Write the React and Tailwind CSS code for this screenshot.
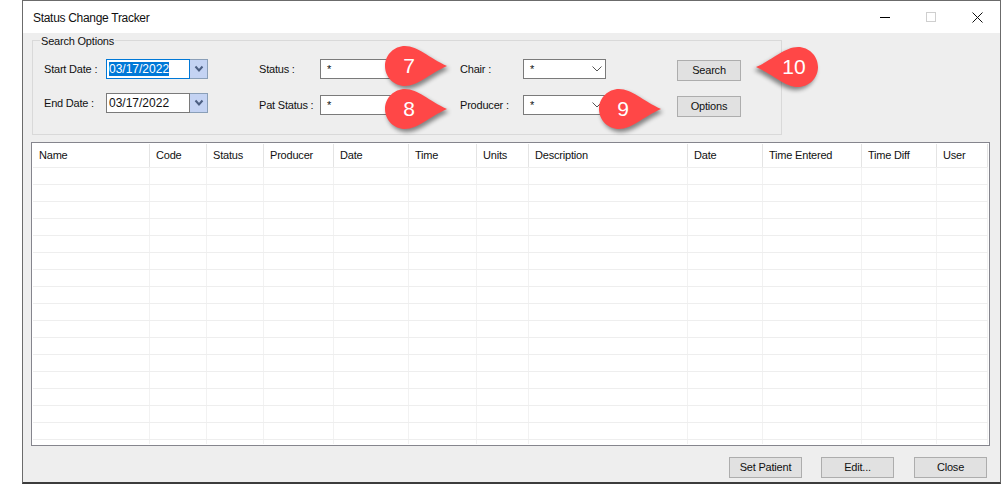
import React from "react";

const font = "font-['Liberation_Sans',sans-serif]";
const uiText = "text-[11px] tracking-[-0.2px] text-[#111] leading-none";

const columns = [
  { name: "Name", w: "w-[117px]" },
  { name: "Code", w: "w-[57px]" },
  { name: "Status", w: "w-[57px]" },
  { name: "Producer", w: "w-[70px]" },
  { name: "Date", w: "w-[75px]" },
  { name: "Time", w: "w-[68px]" },
  { name: "Units", w: "w-[52px]" },
  { name: "Description", w: "w-[159px]" },
  { name: "Date", w: "w-[75px]" },
  { name: "Time Entered", w: "w-[99px]" },
  { name: "Time Diff", w: "w-[75px]" },
  { name: "User", w: "w-[51px]" },
];

const rows = Array.from({ length: 17 });

const WinButton = ({ children, className }) => (
  <button className={`h-[21px] bg-[#e1e1e1] border border-[#adadad] ${uiText} ${className}`}>
    {children}
  </button>
);

const Label = ({ children, className = "" }) => (
  <div className={`self-center ${uiText} ${className}`}>{children}</div>
);

const DateField = ({ focused, className = "" }) => (
  <div className={`flex h-[20px] w-[102px] bg-white ${className}`}>
    <div
      className={`flex-1 flex items-center pl-[2px] border ${
        focused ? "border-[#0078d7]" : "border-[#7a7a7a]"
      } text-[12px] leading-[14px]`}
    >
      <span className={focused ? "bg-[#0078d7] text-white" : "text-[#111]"}>03/17/2022</span>
    </div>
    <div className="w-[18px] flex items-center justify-center bg-[#c4d3f3] border border-[#8a9fb8] border-l-0">
      <svg width="10" height="8" viewBox="0 0 10 8">
        <path d="M1.5 1.5 5 5.500 8.500 1.500" fill="none" stroke="#4c5f82" strokeWidth="2" />
      </svg>
    </div>
  </div>
);

const TextField = () => (
  <div className={`h-[20px] w-[83px] bg-white border border-[#7a7a7a] flex items-center pl-[6px] ${uiText}`}>
    *
  </div>
);

const SelectField = () => (
  <div className={`h-[20px] w-[83px] bg-white border border-[#7a7a7a] flex items-center justify-between pl-[6px] pr-[3px] ${uiText}`}>
    <span>*</span>
    <svg width="10" height="6" viewBox="0 0 10 6">
      <path d="M.5.5 5 5 9.500.5" fill="none" stroke="#555" strokeWidth="1" />
    </svg>
  </div>
);

// numbered red pin pointing to the right
const Callout = ({ label, className, flip }) => (
  <div className={`absolute w-[66px] h-[48px] ${className}`}>
    <svg
      width="66"
      height="48"
      viewBox="0 0 66 48"
      className={`absolute inset-0 overflow-visible drop-shadow-[2px_3px_2px_rgba(0,0,0,0.45)] ${flip ? "-scale-x-100" : ""}`}
    >
      <path d="M23 4C36 4 47 16 65 24 47 32 36 44 23 44 12 44 3 35 3 24S12 4 23 4Z" fill="#ff4747" />
    </svg>
    <span
      className={`absolute top-[12px] w-[40px] ${
        flip ? "right-[7px]" : "left-[7px]"
      } text-center text-white text-[21px] leading-[24px] ${font}`}
    >
      {label}
    </span>
  </div>
);

const App = () => {
  return (
    <div className={`relative w-[1001px] h-[484px] bg-white pl-[22px] overflow-hidden ${font}`}>
      <div className="h-full flex flex-col border border-[#6b6b6b] border-b-2 border-b-[#3c3c3c]">
        {/* title bar */}
        <div className="h-[32px] shrink-0 flex items-center justify-between bg-white pl-[10px]">
          <div className="mt-[1px] text-[12px] tracking-[-0.3px] text-[#111] leading-none">Status Change Tracker</div>
          <div className="flex items-center">
            <div className="w-[46px] flex justify-center">
              <div className="w-[10px] h-[1px] bg-black" />
            </div>
            <div className="w-[46px] flex justify-center">
              <div className="w-[10px] h-[10px] border border-[#cfcfcf]" />
            </div>
            <div className="w-[46px] flex justify-center">
              <svg width="11" height="11" viewBox="0 0 11 11">
                <path d="M.5.5l10 10M10.500.5l-10 10" stroke="#111" strokeWidth="1" fill="none" />
              </svg>
            </div>
          </div>
        </div>

        <div className="flex-1 flex flex-col bg-[#eeeeee] pl-[8px] pr-[9px]">
          {/* search options */}
          <fieldset className="mt-[2px] ml-[1px] w-[750px] h-[100px] border border-[#d9d9d9] pl-[11px]">
            <legend className={`-ml-[4px] px-[1px] ${uiText} leading-[13px]`}>
              <span className="relative top-[1px]">Search Options</span>
            </legend>
            <div className="grid grid-cols-[62px_102px_51px_61px_83px_57px_63px_83px_71px_64px] grid-rows-[20px_20px] gap-y-[16px] items-start mt-[13px]">
              <Label>Start Date :</Label>
              <DateField focused />
              <div />
              <Label>Status :</Label>
              <TextField />
              <div />
              <Label>Chair :</Label>
              <SelectField />
              <div />
              <WinButton className="w-[64px] mt-[1px]">Search</WinButton>

              <Label className="mb-[4px]">End Date :</Label>
              <DateField className="-mt-[2px]" />
              <div />
              <Label>Pat Status :</Label>
              <TextField />
              <div />
              <Label>Producer :</Label>
              <SelectField />
              <div />
              <WinButton className="w-[64px] mt-[1px]">Options</WinButton>
            </div>
          </fieldset>

          {/* grid */}
          <div className="mt-[7px] w-[959px] h-[304px] border border-[#85858d] bg-white p-[1px]">
            <div className="h-full overflow-hidden">
              <div className="flex h-[24px] border-b border-[#eeeeee]">
                {columns.map((col, i) => (
                  <div
                    key={i}
                    className={`${col.w} shrink-0 border-r border-[#e4e4e4] pl-[6px] pt-[6px] ${uiText} leading-[14px]`}
                  >
                    {col.name}
                  </div>
                ))}
              </div>
              {rows.map((_, r) => (
                <div key={r} className="flex h-[17px] border-b border-[#eeeeee]">
                  {columns.map((col, i) => (
                    <div key={i} className={`${col.w} shrink-0 border-r border-[#f2f2f2]`} />
                  ))}
                </div>
              ))}
            </div>
          </div>

          {/* footer buttons */}
          <div className="flex justify-end gap-[19px] mt-[11px] mr-[4px]">
            <WinButton className="w-[73px]">Set Patient</WinButton>
            <WinButton className="w-[73px]">Edit...</WinButton>
            <WinButton className="w-[73px] ml-[1px]">Close</WinButton>
          </div>
        </div>
      </div>

      <Callout label="7" className="left-[382px] top-[42px]" />
      <Callout label="8" className="left-[382px] top-[85px]" />
      <Callout label="9" className="left-[596px] top-[85px]" />
      <Callout label="10" className="left-[755px] top-[43px]" flip />
    </div>
  );
};

export default App;
